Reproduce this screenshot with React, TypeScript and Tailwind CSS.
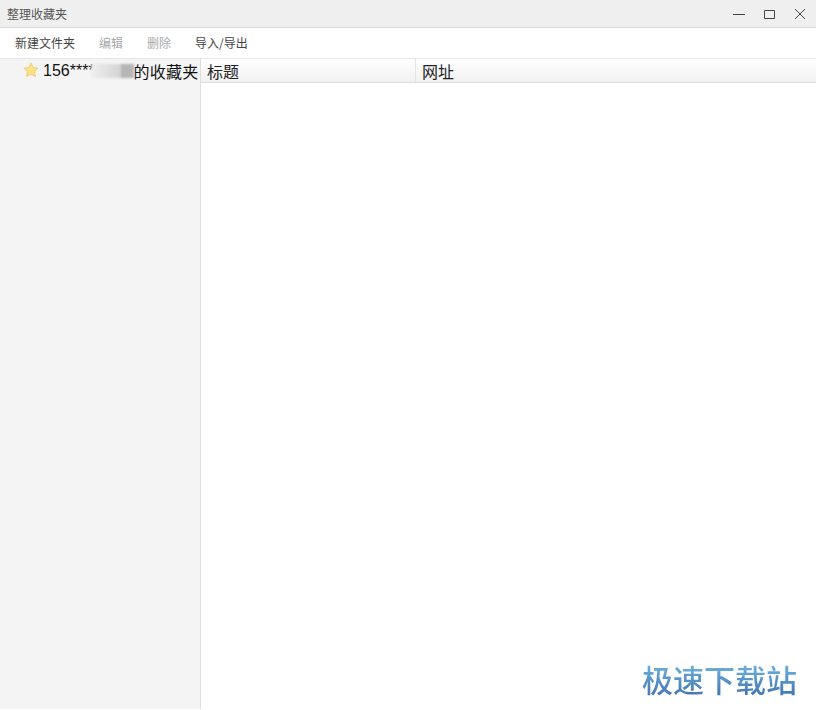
import React from 'react';

const font = { fontFamily: '"Noto Sans CJK SC", "Liberation Sans", sans-serif' };

const tools = [
  { label: "新建文件夹", off: false },
  { label: "编辑", off: true },
  { label: "删除", off: true },
  { label: "导入/导出", off: false },
];

function WindowButtons() {
  return (
    <div className="flex items-center pr-[10px] text-[#444]">
      <svg width="12" height="12" viewBox="0 0 12 12" stroke="currentColor" fill="none">
        <path d="M0 6.5h12" />
      </svg>
      <svg width="12" height="12" viewBox="0 0 12 12" stroke="currentColor" fill="none" className="ml-[19px]">
        <path d="M.5 2.5h10v8H.5z" />
      </svg>
      <svg width="12" height="12" viewBox="0 0 12 12" stroke="currentColor" fill="none" className="ml-[18px]">
        <path d="M1 1l10 10M11 1L1 11" />
      </svg>
    </div>
  );
}

function Star() {
  return (
    <svg width="16" height="16" viewBox="0 0 16 16" className="mb-[2px] shrink-0">
      <path
        d="M8 1l2.2 4.5 4.9.7-3.5 3.4.8 4.9L8 12.2l-4.4 2.3.8-4.9L.9 6.2l4.9-.7z"
        fill="#fce08a"
        stroke="#efc765"
        strokeWidth="0.8"
      />
    </svg>
  );
}

export default function App() {
  return (
    <div className="relative h-[710px] w-[816px] overflow-hidden bg-white" style={font}>
      <div className="flex h-[28px] items-center justify-between border-b border-[#d9d9d9] bg-[#efefef]">
        <span className="pl-[7px] pt-[1px] text-[12px] text-[#555]">整理收藏夹</span>
        <WindowButtons />
      </div>

      <div className="flex h-[31px] items-center gap-[24px] border-b border-[#e6e6e6] pl-[15px]">
        {tools.map((t) => (
          <span key={t.label} className={`text-[12px] ${t.off ? "text-[#aaaaaa]" : "text-[#444444]"}`}>
            {t.label}
          </span>
        ))}
      </div>

      <div className="flex h-[650px]">
        <div className="w-[201px] shrink-0 border-r border-[#dddddd] bg-[#f4f4f4]">
          <div className="flex h-[23px] items-center pl-[23px]">
            <Star />
            <span className="ml-[4px] flex items-center whitespace-nowrap text-[16px] leading-none text-[#111]">
              <span style={{ fontFamily: '"Liberation Sans", sans-serif' }}>156****</span>
              <span className="ml-[-4px] flex h-[14px] w-[43px] blur-[1px]">
                <span className="flex-1 bg-gradient-to-r from-[#efefef] to-[#d4d4d4]" />
                <span className="w-[13px] bg-[#b6b6b6]" />
              </span>
              <span className="tracking-[0.25px]">的收藏夹</span>
            </span>
          </div>
        </div>

        <div className="min-w-0 flex-1">
          <div className="flex h-[24px] border-b border-[#dcdcdc] bg-gradient-to-b from-white to-[#f1f1f1] text-[16px] leading-none text-[#222]">
            <div className="flex w-[215px] items-center border-r border-[#e4e4e4] pl-[6px]">标题</div>
            <div className="flex flex-1 items-center pl-[6px]">网址</div>
          </div>
        </div>
      </div>

      <div className="absolute left-[642px] top-[659px] bg-gradient-to-b from-[#76bde4] to-[#3f6fae] bg-clip-text text-[31px] font-medium leading-[40px] text-transparent">
        极速下载站
      </div>
    </div>
  );
}
